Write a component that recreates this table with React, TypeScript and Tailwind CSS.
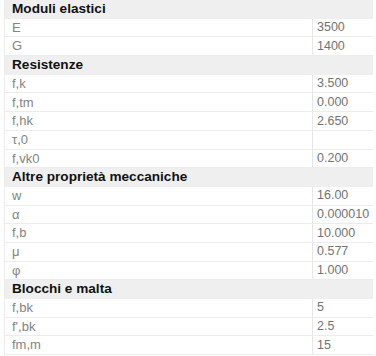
type Row = { label: string; value?: string; header?: boolean };

const rows: Row[] = [
  { label: "Moduli elastici", header: true },
  { label: "E", value: "3500" },
  { label: "G", value: "1400" },
  { label: "Resistenze", header: true },
  { label: "f,k", value: "3.500" },
  { label: "f,tm", value: "0.000" },
  { label: "f,hk", value: "2.650" },
  { label: "τ,0", value: "" },
  { label: "f,vk0", value: "0.200" },
  { label: "Altre proprietà meccaniche", header: true },
  { label: "w", value: "16.00" },
  { label: "α", value: "0.000010" },
  { label: "f,b", value: "10.000" },
  { label: "μ", value: "0.577" },
  { label: "φ", value: "1.000" },
  { label: "Blocchi e malta", header: true },
  { label: "f,bk", value: "5" },
  { label: "f',bk", value: "2.5" },
  { label: "fm,m", value: "15" },
];

export default function App() {
  return (
    <div className="w-[376px] h-[356px] overflow-hidden bg-white font-['Liberation_Sans',Arial,sans-serif]">
      <div className="ml-[4px] w-[369px] border-l border-[#ececec]">
        {rows.map((r, i) =>
          r.header ? (
            <div
              key={i}
              className="h-[18.7px] flex items-center bg-[#efefef] pl-[7px] text-[13.6px] font-bold text-[#111]"
            >
              {r.label}
            </div>
          ) : (
            <div key={i} className="h-[18.7px] flex border-b border-[#ececec] text-[13px] text-[#838383]">
              <div className="w-[307px] flex items-center pl-[7px]">{r.label}</div>
              <div className="flex-1 flex items-center border-l border-[#e6e6e6] pl-[4px] text-[12.5px] text-[#737373]">
                {r.value}
              </div>
            </div>
          )
        )}
      </div>
    </div>
  );
}
